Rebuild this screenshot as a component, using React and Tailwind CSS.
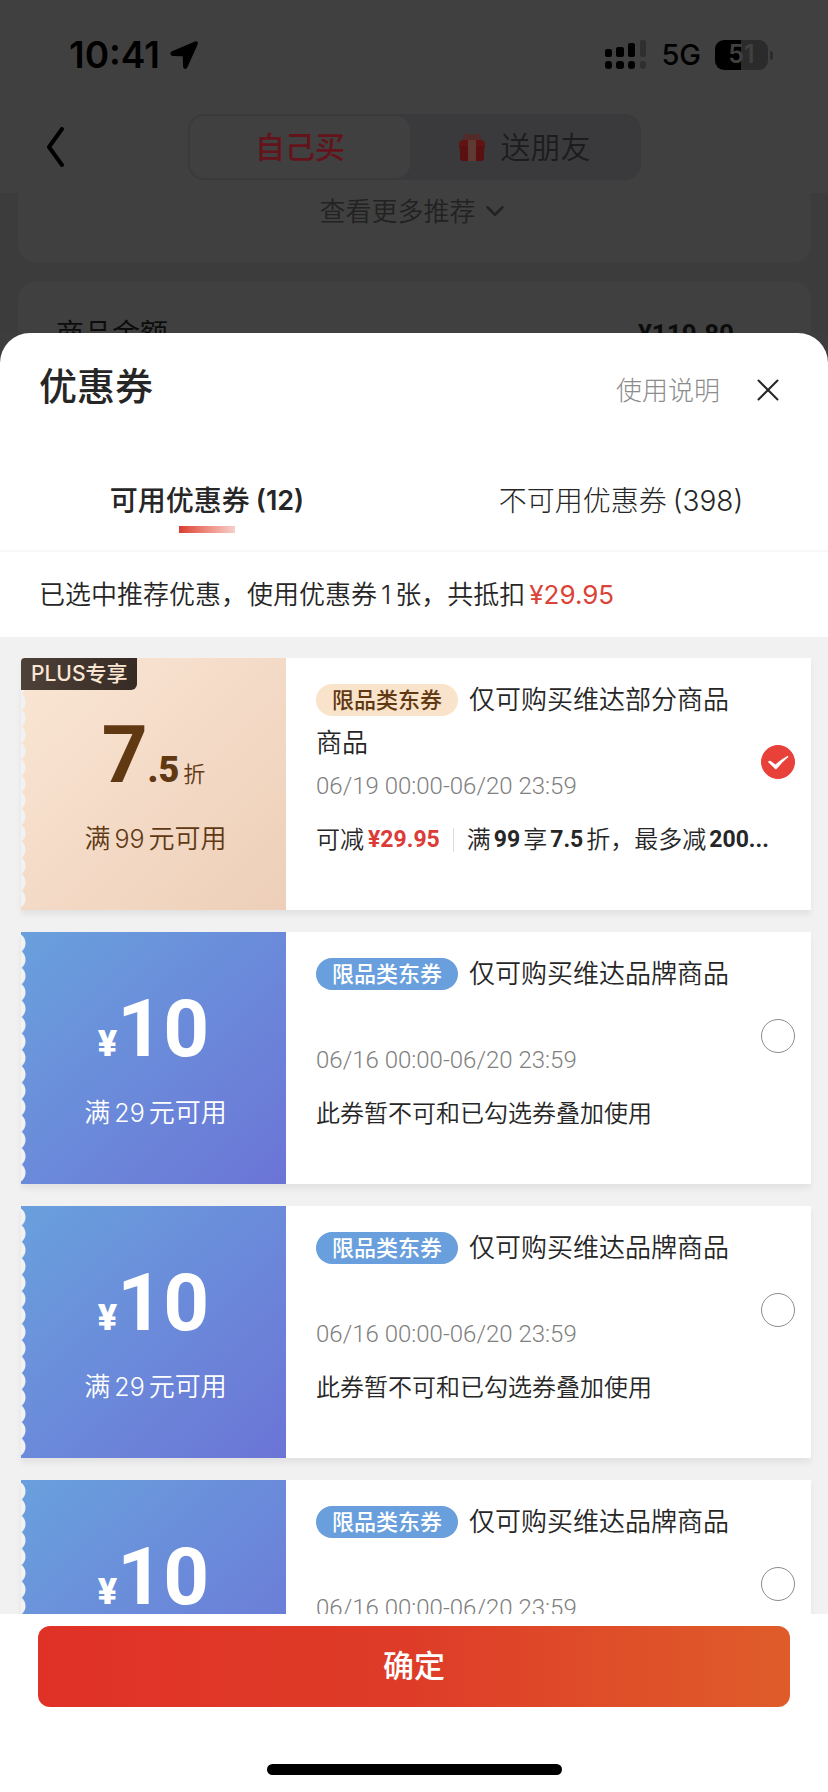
import { useState } from 'react';
import { ChevronDown, X } from 'lucide-react';

const coupons = [
  {
    id: 1,
    plus: true,
    title: '仅可购买维达部分商品商品',
    threshold: 99,
    period: '06/19 00:00-06/20 23:59',
  },
  {
    id: 2,
    title: '仅可购买维达品牌商品',
    threshold: 29,
    period: '06/16 00:00-06/20 23:59',
  },
  {
    id: 3,
    title: '仅可购买维达品牌商品',
    threshold: 29,
    period: '06/16 00:00-06/20 23:59',
  },
  {
    id: 4,
    title: '仅可购买维达品牌商品',
    threshold: 29,
    period: '06/16 00:00-06/20 23:59',
  },
];

const Signal = () => (
  <svg viewBox="0 0 42 30" className="h-[30px] w-[42px]" aria-hidden="true">
    <g fill="#000">
      <rect x="0" y="9" width="7" height="8" rx="2" />
      <rect x="11" y="7" width="8" height="10" rx="2" />
      <rect x="23" y="3" width="7" height="14" rx="2" />
      <rect x="0" y="21" width="7" height="8" rx="3" />
      <rect x="11" y="21" width="8" height="8" rx="3" />
      <rect x="23" y="21" width="7" height="8" rx="3" />
    </g>
    <g fill="#2f2f2f">
      <rect x="35" y="0" width="6" height="17" rx="2" />
      <rect x="35" y="21" width="6" height="8" rx="3" />
    </g>
  </svg>
);

const Gift = () => (
  <svg viewBox="0 0 28 30" className="h-[30px] w-7" aria-hidden="true">
    <path
      d="M14 8C11 3 6 2 6 5s4 3 8 3c4 0 8 0 8-3s-5-2-8 3M14 8l-3-6M14 8l3-6"
      fill="none"
      stroke="#5c2624"
      strokeWidth="2"
    />
    <rect x="1" y="8" width="26" height="10" rx="4" fill="#601313" />
    <rect x="2" y="14" width="24" height="15" rx="3" fill="#5a1010" />
    <rect x="10" y="8" width="8" height="21" fill="#5f3a34" />
  </svg>
);

const StatusBar = () => (
  <div className="flex h-[110px] items-center justify-between pr-[55px] pl-[69px] text-black">
    <div className="flex items-center gap-[10px]">
      <span className="font-[Inter,sans-serif] text-[37px] font-semibold">10:41</span>
      <svg viewBox="0 0 28 28" className="size-7" aria-hidden="true">
        <path d="M25 .6 2 10.200C-.4 11.300 0 14.800 2.600 14.900L12 15.200c.6 0 .8.3.8.8l.3 9.400c.1 2.600 3.200 3.200 4.300.8L27.600 3.600C28.500 1.400 27.200-.3 25 .6Z" />
      </svg>
    </div>
    <div className="flex items-center">
      <Signal />
      <span className="ml-[14px] font-[Inter,sans-serif] text-[29px] font-medium">5G</span>
      <div className="ml-[14px] flex h-[30px] w-[53px] items-center justify-center rounded-[9px] bg-[linear-gradient(90deg,#000_50%,#2b2b2b_50%)] font-[Inter,sans-serif] text-[25px] font-semibold">
        <span className="text-[#404040]">5</span>
        <span className="text-[#404040]">1</span>
      </div>
      <div className="ml-[2px] h-[9px] w-[3px] rounded-r-full bg-[#2b2b2b]" />
    </div>
  </div>
);

const Backdrop = () => (
  <div className="h-[333px] shrink-0 overflow-hidden bg-[#3c3c3c]">
    <header className="bg-[#404040]">
      <StatusBar />
      <div className="flex h-[83px] items-start pt-1">
        <button type="button" aria-label="返回" className="ml-[46px] flex h-[66px] items-center">
          <svg viewBox="0 0 20 40" className="h-10 w-5" aria-hidden="true">
            <path d="M16 2 3 20l13 18" fill="none" stroke="#000" strokeWidth="4" strokeLinecap="round" strokeLinejoin="round" />
          </svg>
        </button>
        <div className="mr-[187px] ml-[122px] grid h-[66px] flex-1 grid-cols-[49fr_51fr] rounded-2xl bg-[#3a3a3c] p-[2px] text-[30px]">
          <button type="button" className="rounded-[14px] bg-[#404041] font-medium text-[#64131a]">
            自己买
          </button>
          <button type="button" className="flex items-center justify-center gap-[14px] font-[350] text-[#1c1c1d]">
            <Gift />
            送朋友
          </button>
        </div>
      </div>
    </header>
    <div className="mr-[17px] ml-[18px]">
      <div className="flex h-[69px] justify-center rounded-b-2xl bg-[#404040] text-[#222222]">
        <button type="button" className="flex h-9 items-center gap-1 text-[26px] font-[350]">
          查看更多推荐
          <ChevronDown size={30} strokeWidth={2} />
        </button>
      </div>
      <div className="mt-5 flex items-center justify-between rounded-t-2xl bg-[#404040] pt-8 pr-[77px] pl-[38px] text-[28px] leading-10 text-[#0c0c0c]">
        <span>商品金额</span>
        <span className="font-[Roboto,sans-serif] text-[26px] font-bold">¥119.80</span>
      </div>
    </div>
  </div>
);

const CouponValue = ({ coupon }) => (
  <div
    className={`relative flex w-[265px] shrink-0 flex-col items-center pt-[57px] ${
      coupon.plus
        ? 'bg-linear-to-br from-[#fae6d5] to-[#edcfb8] text-[#603913]'
        : 'bg-linear-to-br from-[#69a0dd] to-[#6b74d6] text-white'
    }`}
  >
    {/* torn ticket edge */}
    <div className="absolute inset-y-[3px] left-0 w-[5px] bg-[radial-gradient(circle_at_-6px_50%,#f2f2f2_10px,transparent_11px)] bg-size-[5px_16px] bg-repeat-round" />
    {coupon.plus && (
      <span className="absolute top-0 left-0 h-8 rounded-tl rounded-br-md bg-linear-to-r from-[#4d4139] to-[#372b25] px-[10px] text-[21px] leading-8 font-medium text-[#fbe6d3]">
        PLUS专享
      </span>
    )}
    <p className="flex items-baseline font-[Roboto,'Noto_Sans_CJK_SC',sans-serif] font-bold">
      {coupon.plus ? (
        <>
          <span className="text-[80px] leading-[80px]">7</span>
          <span className="text-[36px] leading-10 font-black">.5</span>
          <span className="ml-1 text-[22px] leading-8 font-[350]">折</span>
        </>
      ) : (
        <>
          <span className="text-[36px] leading-10 font-black">¥</span>
          <span className="text-[80px] leading-[80px]">10</span>
        </>
      )}
    </p>
    <p className="mt-[26px] flex gap-1 pl-1 text-[26px] leading-9 font-[350]">
      <span>满</span>
      <span className="text-[25px]">{coupon.threshold}</span>
      <span>元可用</span>
    </p>
  </div>
);

const CouponCard = ({ coupon, checked, onToggle }) => (
  <li className="flex min-h-[252px] bg-white shadow-[0_5px_6px_rgba(0,0,0,0.06)]">
    <CouponValue coupon={coupon} />
    <div className="min-w-0 flex-1 pt-5 pr-4 pb-12 pl-[30px]">
      <div className="flex items-start gap-4">
        <label htmlFor={`coupon-${coupon.id}`} className="flex-1">
          <span className="block min-h-[86px] text-[26px] leading-[43px] font-[350] text-[#262626]">
            <span
              className={`mt-[6px] mr-[11px] inline-block h-8 rounded-full px-4 align-top text-[22px] leading-8 font-medium ${
                coupon.plus ? 'bg-[#fae3cb] text-[#603913]' : 'bg-[#699fdc] text-white'
              }`}
            >
              限品类东券
            </span>
            {coupon.title}
          </span>
          <span className="block font-[Roboto,sans-serif] text-[24px] leading-[44px] font-light text-[#808080]">
            {coupon.period}
          </span>
        </label>
        <div className="mt-[67px] grid size-[34px] shrink-0 place-items-center">
          <input
            id={`coupon-${coupon.id}`}
            type="checkbox"
            checked={checked}
            onChange={onToggle}
            className="col-start-1 row-start-1 size-[34px] appearance-none rounded-full border border-[#8c8c8c] checked:border-[#e8413a] checked:bg-[#e8413a]"
          />
          {checked && (
            <svg viewBox="0 0 34 34" className="pointer-events-none col-start-1 row-start-1 size-[34px]" aria-hidden="true">
              <path d="M7 17c.8-1.400 2.200-1.600 3.400-.6l4 3.200c4-3.600 7.700-6.300 12.400-8.800l.6 1.200c-4.400 3.600-7.900 7.300-11.300 11.600-.7.900-1.600.9-2.200.1Z" fill="#fff" />
            </svg>
          )}
        </div>
      </div>
      {coupon.plus ? (
        <p className="mt-[10px] flex items-center text-[24px] leading-[44px] font-[350] whitespace-nowrap text-[#262626]">
          <span>可减</span>
          <b className="ml-1 font-[Roboto,sans-serif] text-[23px] font-bold text-[#dc3b36]">¥29.95</b>
          <span className="mx-[13px] h-6 w-px bg-[#dcdcdc]" />
          <span>满</span>
          <b className="mx-[3px] font-[Roboto,sans-serif] text-[23px] font-bold">99</b>
          <span>享</span>
          <b className="mx-[3px] font-[Roboto,sans-serif] text-[23px] font-bold">7.5</b>
          <span>折，最多减</span>
          <b className="ml-[3px] font-[Roboto,sans-serif] text-[23px] font-bold">200...</b>
        </p>
      ) : (
        <p className="mt-[10px] text-[24px] leading-[44px] font-[350] text-[#262626]">此券暂不可和已勾选券叠加使用</p>
      )}
    </div>
  </li>
);

const App = () => {
  const [selected, setSelected] = useState(1);

  return (
    <div className="flex h-screen flex-col overflow-hidden bg-[#3d3d3d] font-[Inter,'Noto_Sans_CJK_SC',sans-serif]">
      <Backdrop />
      <section className="flex min-h-0 flex-1 flex-col overflow-hidden rounded-t-[30px] bg-white">
        <div className="flex items-center pt-[25px] pr-[41px] pl-[39px] text-[#262626]">
          <h1 className="flex-1 pb-1 text-[38px] leading-[56px] font-medium">优惠券</h1>
          <a href="#rules" className="pt-1 text-[26px] font-light text-[#8c8c8c]">
            使用说明
          </a>
          <button type="button" aria-label="关闭" className="ml-[29px] pt-1">
            <X size={38} strokeWidth={2} absoluteStrokeWidth />
          </button>
        </div>

        <div className="mt-[58px] grid grid-cols-2 border-b-2 border-[#f7f7f7] text-[28px] leading-[50px] text-[#262626]">
          <button type="button" className="flex flex-col items-center pb-[17px] font-medium">
            <span className="flex gap-[6px]">
              <span>可用优惠券</span>
              <span className="text-[27px] font-semibold">(12)</span>
            </span>
            <span className="h-[7px] w-14 bg-linear-to-r from-[#d93a2f] to-[#f6cfcb]" />
          </button>
          <button type="button" className="flex justify-center gap-[6px] font-light">
            <span>不可用优惠券</span>
            <span>(398)</span>
          </button>
        </div>

        <p className="flex h-[85px] shrink-0 items-center pl-[39px] text-[26px] font-[350] text-[#262626]">
          <span>已选中推荐优惠，使用优惠券</span>
          <span className="mx-1">1</span>
          <span>张，共抵扣</span>
          <span className="ml-1 font-normal text-[#dc4338]">¥29.95</span>
        </p>

        <ul className="flex min-h-0 flex-1 flex-col gap-[22px] overflow-y-auto bg-[#f1f1f1] pt-[21px] pr-[17px] pl-[21px] [scrollbar-width:none]">
          {coupons.map((coupon) => (
            <CouponCard
              key={coupon.id}
              coupon={coupon}
              checked={selected === coupon.id}
              onToggle={() => setSelected(selected === coupon.id ? null : coupon.id)}
            />
          ))}
        </ul>

        <div className="flex flex-col items-center px-[38px] pt-3 pb-[17px]">
          <button
            type="button"
            className="h-[81px] w-full rounded-xl bg-linear-to-r from-[#e03127] via-[#de3c28] to-[#df5c2a] text-[31px] font-medium text-white"
          >
            确定
          </button>
          <div className="mt-[57px] h-[11px] w-[295px] rounded-full bg-black" />
        </div>
      </section>
    </div>
  );
};

export default App;
